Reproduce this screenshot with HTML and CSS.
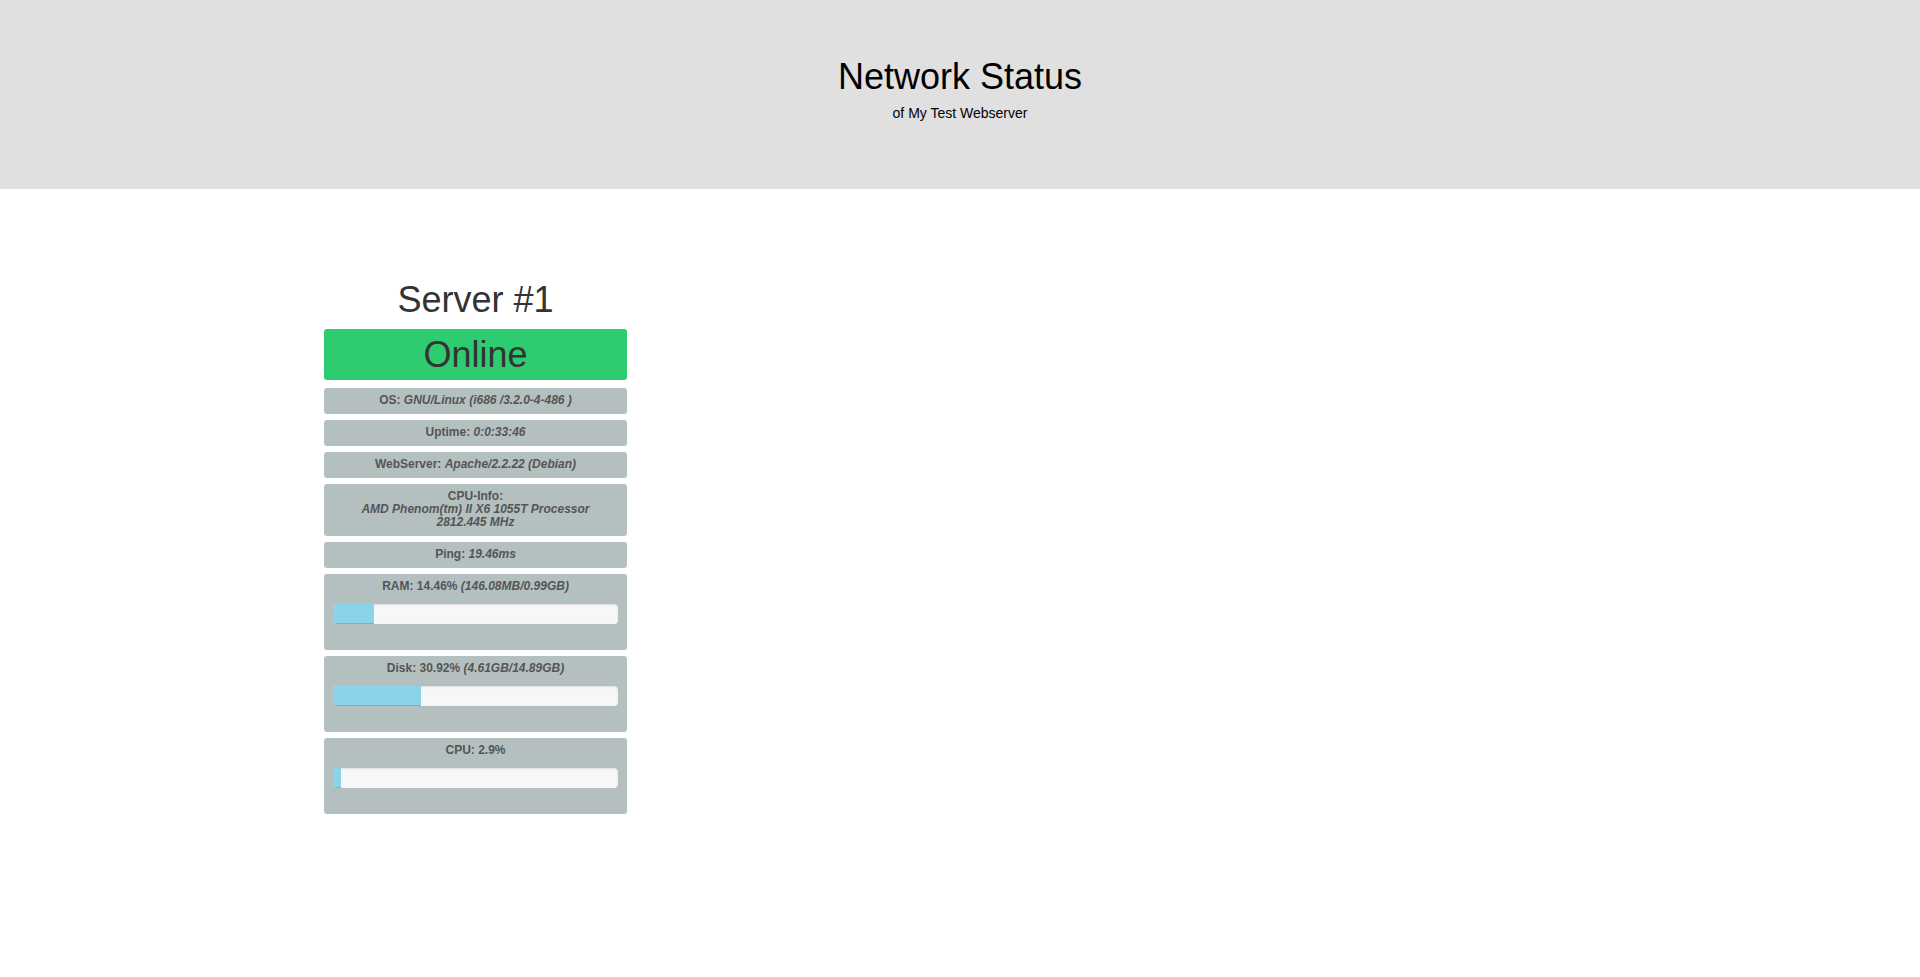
FILE: index.html
```html
<!DOCTYPE html>
<html lang="en">
<head>
<meta charset="utf-8">
<title>Network Status</title>
<meta name="viewport" content="width=device-width, initial-scale=1">
<link rel="stylesheet" href="styles.css">
</head>
<body>
<header class="banner">
  <h1 class="title">Network Status</h1>
  <p class="subtitle">of My Test Webserver</p>
</header>
<main class="servers">
  <section class="server">
    <h2 class="title">Server #1</h2>
    <p class="title state">Online</p>
    <div class="info">OS: <i>GNU/Linux (i686 /3.2.0-4-486 )</i></div>
    <div class="info">Uptime: <i>0:0:33:46</i></div>
    <div class="info">WebServer: <i>Apache/2.2.22 (Debian)</i></div>
    <div class="info">CPU-Info:<br><i>AMD Phenom(tm) II X6 1055T Processor<br>2812.445 MHz</i></div>
    <div class="info">Ping: <i>19.46ms</i></div>
    <div class="info">RAM: 14.46% <i>(146.08MB/0.99GB)</i>
      <div class="progress"><div class="bar" style="width: 14.46%"></div></div>
    </div>
    <div class="info">Disk: 30.92% <i>(4.61GB/14.89GB)</i>
      <div class="progress"><div class="bar" style="width: 30.92%"></div></div>
    </div>
    <div class="info">CPU: 2.9%
      <div class="progress"><div class="bar" style="width: 2.9%"></div></div>
    </div>
  </section>
</main>
</body>
</html>
```
FILE: styles.css
```css
* {
  box-sizing: border-box;
}

body {
  margin: 0;
  background: #fff;
  color: #333;
  font: 14px/20px "Liberation Sans", Arial, sans-serif;
  text-align: center;
}

.banner {
  padding: 57px 16px 66px;
  background: #e0e0e0;
  color: #000;
}

.title {
  margin: 0;
  font-size: 36px;
  font-weight: 400;
  line-height: 40px;
}

.subtitle {
  margin: 6px 0 0;
}

.servers {
  display: grid;
  grid-template-columns: repeat(auto-fill, minmax(280px, 1fr));
  gap: 20px;
  max-width: 1304px;
  margin: 0 auto;
  padding: 91px 16px;
}

.state {
  margin: 9px 0 8px;
  padding: 6px 0 5px;
  border-radius: 3px;
  background: #2ecc71;
}

.info {
  margin-bottom: 6px;
  padding: 6px 9px 7px;
  border-radius: 3px;
  background: #b4c0c0;
  color: #555;
  font-size: 12px;
  font-weight: 700;
  line-height: 13px;
}

.progress {
  height: 20px;
  margin: 11px 0 19px;
  overflow: hidden;
  border-radius: 4px;
  background: #f7f7f7;
  box-shadow: inset 0 1px 2px rgba(0, 0, 0, 0.1);
}

.bar {
  height: 100%;
  background: #8bd3e8;
  box-shadow: inset 0 -1px 0 rgba(0, 0, 0, 0.15);
}
```
